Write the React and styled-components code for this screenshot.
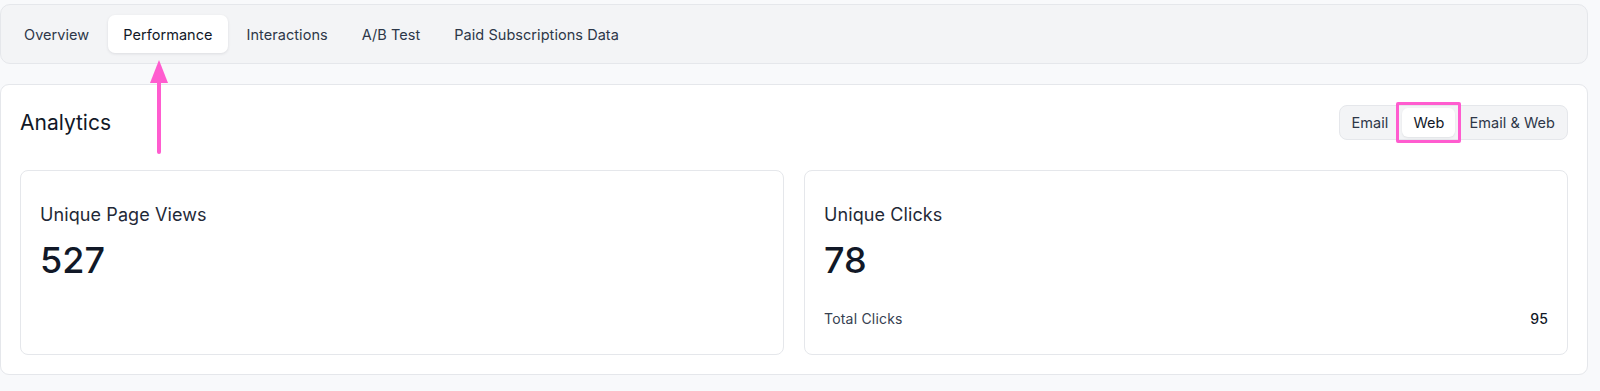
import styled, { createGlobalStyle } from "styled-components";

const GlobalStyle = createGlobalStyle`
  body {
    margin: 0;
    background: #f8f9fb;
    font-family: "Inter", "Liberation Sans", sans-serif;
    color: #111827;
  }
`;

const tabs = [
  "Overview",
  "Performance",
  "Interactions",
  "A/B Test",
  "Paid Subscriptions Data",
];

const channels = ["Email", "Web", "Email & Web"];

function App() {
  return (
    <Page>
      <GlobalStyle />
      <TabBar>
        {tabs.map((t) => (
          <Tab key={t} $active={t === "Performance"}>
            {t}
          </Tab>
        ))}
      </TabBar>

      <Panel>
        <PanelHeader>
          <Title>Analytics</Title>
          <Toggle>
            {channels.map((c) => (
              <ToggleButton key={c} $active={c === "Web"}>
                {c}
              </ToggleButton>
            ))}
          </Toggle>
        </PanelHeader>

        <CardGrid>
          <StatCard>
            <StatLabel>Unique Page Views</StatLabel>
            <StatValue>527</StatValue>
          </StatCard>
          <StatCard>
            <StatLabel>Unique Clicks</StatLabel>
            <StatValue>78</StatValue>
            <DetailRow>
              <span>Total Clicks</span>
              <strong>95</strong>
            </DetailRow>
          </StatCard>
        </CardGrid>
      </Panel>

      <Arrow width="20" height="96" viewBox="0 0 20 96">
        <polygon points="10,0 19,23 1,23" fill="#ff5ccf" />
        <line
          x1="10"
          y1="20"
          x2="10"
          y2="92"
          stroke="#ff5ccf"
          strokeWidth="4"
          strokeLinecap="round"
        />
      </Arrow>
    </Page>
  );
}
export default App;

const Page = styled.div`
  position: relative;
  padding: 4px 12px 18px 0;
  display: flex;
  flex-direction: column;
  gap: 20px;
`;

const TabBar = styled.div`
  display: flex;
  align-items: center;
  gap: 4px;
  padding: 10px 8px;
  background: #f3f4f6;
  border: 1px solid #e5e7eb;
  border-radius: 10px;
`;

const Tab = styled.div`
  height: 38px;
  display: flex;
  align-items: center;
  padding: 0 15px;
  border-radius: 7px;
  font-size: 14.5px;
  letter-spacing: 0.05px;
  font-weight: 400;
  color: ${(p) => (p.$active ? "#111827" : "#2d3748")};
  background: ${(p) => (p.$active ? "#ffffff" : "transparent")};
  box-shadow: ${(p) =>
    p.$active ? "0 1px 3px rgba(17, 24, 39, 0.1)" : "none"};
`;

const Panel = styled.div`
  background: #ffffff;
  border: 1px solid #e5e7eb;
  border-radius: 9px;
  padding: 20px 19px 19px;
`;

const PanelHeader = styled.div`
  display: flex;
  align-items: center;
  justify-content: space-between;
  margin-bottom: 30px;
`;

const Title = styled.h2`
  margin: 0;
  font-size: 21px;
  font-weight: 400;
  color: #111827;
`;

const Toggle = styled.div`
  display: flex;
  gap: 4px;
  padding: 2px;
  background: #f3f4f6;
  border: 1px solid #e5e7eb;
  border-radius: 8px;
`;

const ToggleButton = styled.div`
  position: relative;
  height: 29px;
  display: flex;
  align-items: center;
  padding: 0 ${(p) => (p.$active ? "11px" : "10px")};
  border-radius: 6px;
  font-size: 14.5px;
  letter-spacing: 0.05px;
  color: ${(p) => (p.$active ? "#111827" : "#2d3748")};
  background: ${(p) => (p.$active ? "#ffffff" : "transparent")};
  box-shadow: ${(p) =>
    p.$active ? "0 1px 2px rgba(17, 24, 39, 0.08)" : "none"};

  &::after {
    content: "";
    display: ${(p) => (p.$active ? "block" : "none")};
    position: absolute;
    inset: -6px;
    border: 3px solid #ff5ccf;
    border-radius: 2px;
  }
`;

const CardGrid = styled.div`
  display: grid;
  grid-template-columns: 1fr 1fr;
  gap: 20px;
`;

const StatCard = styled.div`
  height: 185px;
  box-sizing: border-box;
  border: 1px solid #e5e7eb;
  border-radius: 8px;
  padding: 30px 19px 20px;
  display: flex;
  flex-direction: column;
`;

const StatLabel = styled.div`
  font-size: 18px;
  line-height: 28px;
  letter-spacing: 0.1px;
  color: #1f2937;
`;

const StatValue = styled.div`
  margin-top: 11px;
  font-size: 36px;
  line-height: 40px;
  font-weight: 500;
  color: #111827;
`;

const DetailRow = styled.div`
  margin-top: 29px;
  display: flex;
  justify-content: space-between;
  font-size: 14px;
  line-height: 20px;
  letter-spacing: 0.2px;
  color: #374151;

  strong {
    font-weight: 500;
    color: #111827;
  }
`;

const Arrow = styled.svg`
  position: absolute;
  left: 149px;
  top: 60px;
`;
